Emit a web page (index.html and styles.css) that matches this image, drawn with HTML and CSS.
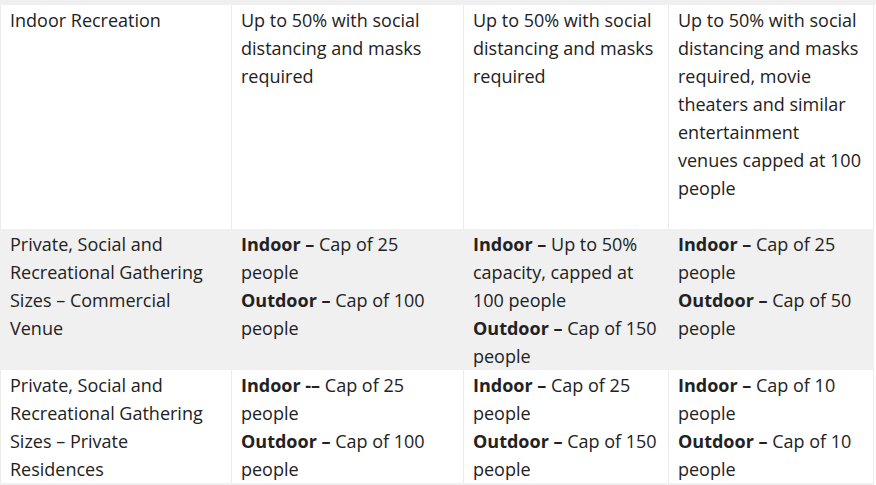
FILE: index.html
```html
<!DOCTYPE html>
<html lang="en">
<head>
<meta charset="utf-8">
<title>Gathering limits</title>
<link rel="stylesheet" href="styles.css">
</head>
<body>
<div class="strip"></div>
<table class="limits">
  <colgroup>
    <col class="c1"><col class="c2"><col class="c3"><col class="c4">
  </colgroup>
  <tbody>
    <tr class="row-white row-tall">
      <td>Indoor Recreation</td>
      <td>Up to 50% with social distancing and masks required</td>
      <td>Up to 50% with social distancing and masks required</td>
      <td class="last">Up to 50% with social distancing and masks required, movie theaters and similar entertainment venues capped at 100 people</td>
    </tr>
    <tr class="row-grey">
      <td>Private, Social and Recreational Gathering Sizes – Commercial Venue</td>
      <td><strong>Indoor –</strong> Cap of 25 people<br><strong>Outdoor –</strong> Cap of 100 people</td>
      <td><strong>Indoor –</strong> Up to 50% capacity, capped at 100 people<br><strong>Outdoor –</strong> Cap of 150 people</td>
      <td class="last"><strong>Indoor –</strong> Cap of 25 people<br><strong>Outdoor –</strong> Cap of 50 people</td>
    </tr>
    <tr class="row-white">
      <td>Private, Social and Recreational Gathering Sizes – Private Residences</td>
      <td><strong>Indoor -–</strong> Cap of 25 people<br><strong>Outdoor –</strong> Cap of 100 people</td>
      <td><strong>Indoor –</strong> Cap of 25 people<br><strong>Outdoor –</strong> Cap of 150 people</td>
      <td class="last"><strong>Indoor –</strong> Cap of 10 people<br><strong>Outdoor –</strong> Cap of 10 people</td>
    </tr>
    <tr class="row-grey">
      <td>&nbsp;</td><td>&nbsp;</td><td>&nbsp;</td><td class="last">&nbsp;</td>
    </tr>
  </tbody>
</table>
</body>
</html>
```
FILE: styles.css
```css
html, body {
  margin: 0;
  padding: 0;
  background: #ffffff;
}
body {
  font-family: "Open Sans", "Noto Sans", sans-serif;
  font-size: 18px;
  line-height: 28px;
  color: #222222;
  overflow: hidden;
}
.strip {
  height: 5px;
  background: #f0f0f0;
}
.limits {
  border-collapse: collapse;
  table-layout: fixed;
  width: 874px;
}
.c1 { width: 231px; }
.c2 { width: 232px; }
.c3 { width: 205px; }
.c4 { width: 205px; }
.limits td {
  vertical-align: top;
  padding: 1px 8px 0 9px;
  border-left: 1px solid #ececec;
  border-right: 1px solid #ececec;
}
.limits td.last {
  padding-right: 11px;
}
.row-tall td {
  padding-bottom: 27px;
}
.row-grey td {
  background: #f0f0f0;
  border-color: #f0f0f0;
}
.limits strong {
  font-weight: 700;
}
```
